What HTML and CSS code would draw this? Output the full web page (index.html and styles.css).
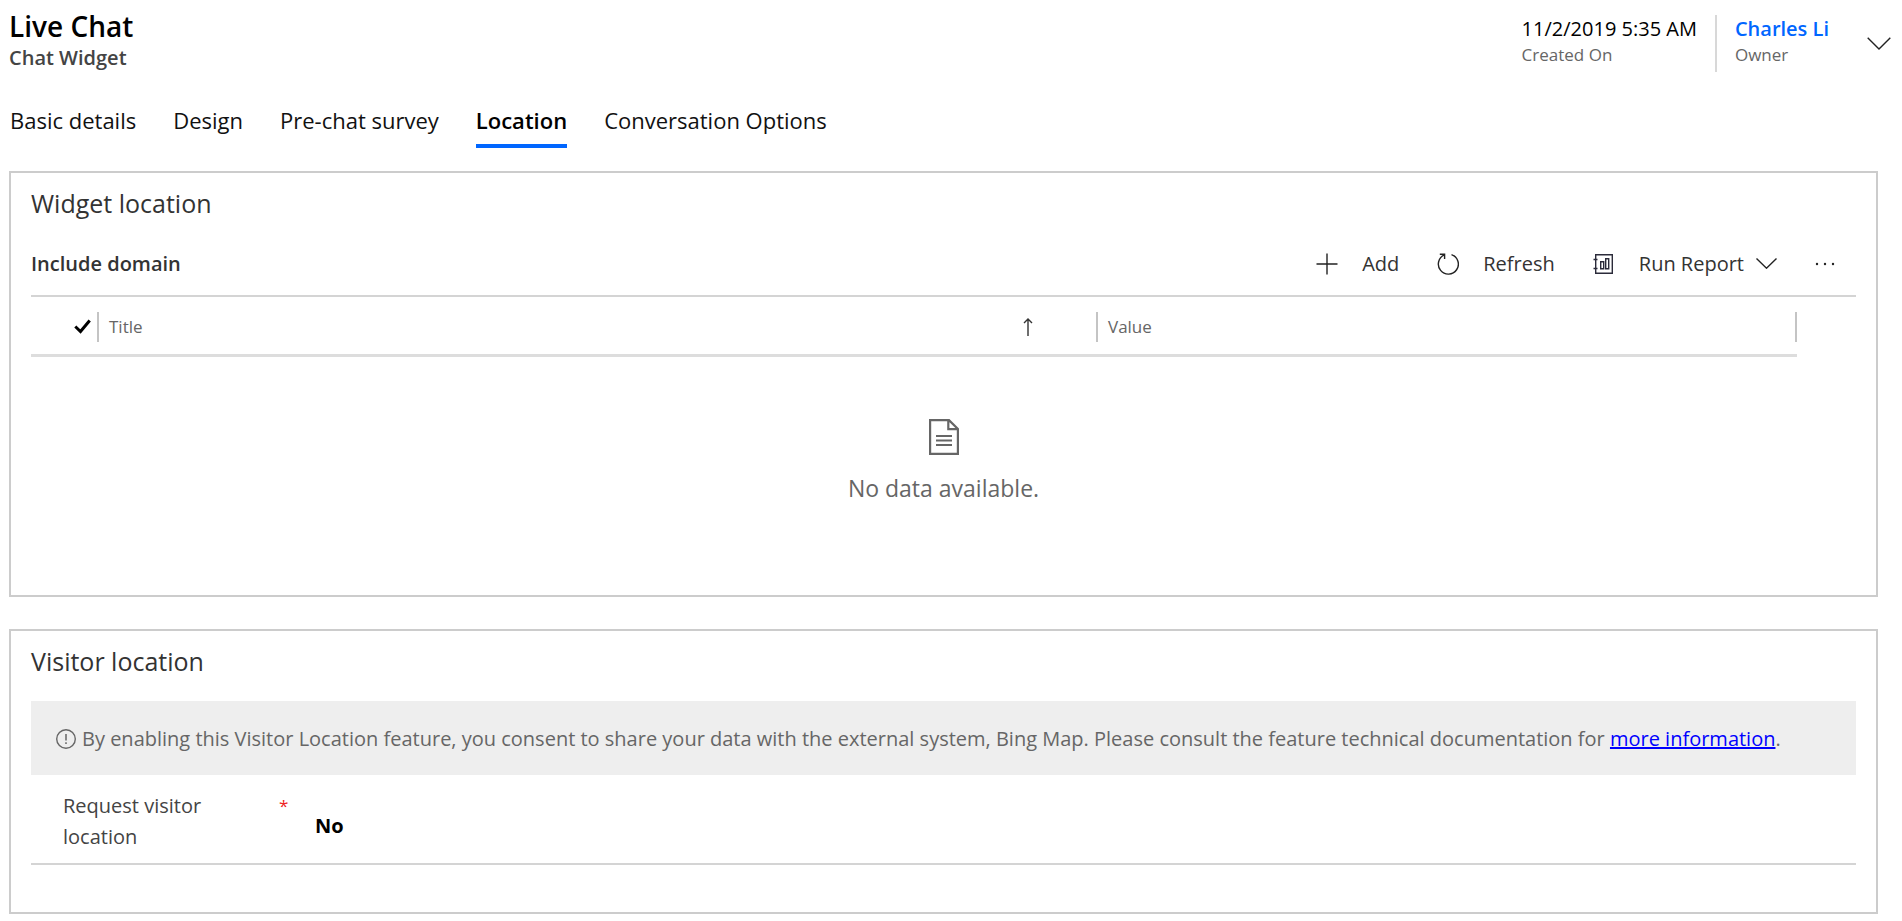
FILE: index.html
```html
<!DOCTYPE html>
<html lang="en">
<head>
<meta charset="utf-8">
<title>Live Chat</title>
<link rel="stylesheet" href="styles.css">
</head>
<body>
<header class="header">
  <div class="record">
    <h1 class="record-name">Live Chat</h1>
    <p class="record-type">Chat Widget</p>
  </div>
  <div class="facts">
    <div class="fact fact-date">
      <span class="fact-value">11/2/2019 5:35 AM</span>
      <span class="fact-label">Created On</span>
    </div>
    <div class="fact fact-owner">
      <a class="fact-value fact-link" href="#">Charles Li</a>
      <span class="fact-label">Owner</span>
    </div>
    <button class="icon-button" type="button" aria-label="Show more">
      <svg width="24" height="13" viewBox="0 0 24 13"><path d="M.7.7 12 12 23.3.7" fill="none" stroke="#222" stroke-width="1.4"/></svg>
    </button>
  </div>
</header>

<nav class="tabs">
  <a class="tab" href="#">Basic details</a>
  <a class="tab" href="#">Design</a>
  <a class="tab" href="#">Pre-chat survey</a>
  <a class="tab tab-active" href="#" aria-current="page">Location</a>
  <a class="tab" href="#">Conversation Options</a>
</nav>

<main class="sections">
  <section class="card">
    <h2 class="card-title">Widget location</h2>
    <div class="grid-bar">
      <h3 class="grid-title">Include domain</h3>
      <div class="commands">
        <button class="command" type="button">
          <svg width="22" height="22" viewBox="0 0 22 22"><path d="M11 .5v21M.5 11h21" fill="none" stroke="#222" stroke-width="1.4"/></svg>
          Add
        </button>
        <button class="command" type="button">
          <svg width="22" height="22" viewBox="0 0 22 22"><path d="M14.5 1.6A10 10 0 1 1 7.4 1.9M2.8 1.2H7.6V6" fill="none" stroke="#222" stroke-width="1.4"/></svg>
          Refresh
        </button>
        <button class="command" type="button">
          <svg width="22" height="22" viewBox="0 0 22 22"><g fill="none" stroke="#2b2b3a" stroke-width="1.4"><path d="M2.7 1.7H19.3V20.3H2.7ZM.5 6.5h4M.5 15.5h4"/><path d="M7.7 8.7h3v7h-3zM12.7 5.7h3v10h-3z"/></g></svg>
          <span class="command-menu">Run Report
            <svg width="21" height="11" viewBox="0 0 21 11"><path d="M.5.5l10 9.7 10-9.7" fill="none" stroke="#222" stroke-width="1.4"/></svg>
          </span>
        </button>
        <button class="command" type="button" aria-label="More commands">
          <svg width="20" height="4" viewBox="0 0 20 4"><g fill="#222"><circle cx="2" cy="2" r="1.2"/><circle cx="10" cy="2" r="1.2"/><circle cx="18" cy="2" r="1.2"/></g></svg>
        </button>
      </div>
    </div>
    <div class="grid">
      <table class="grid-table">
        <thead>
          <tr>
            <th class="col-check"><div class="cell"><svg width="17" height="15" viewBox="0 0 17 15" role="img" aria-label="Select all"><path d="M1.3 7.5 6.5 12.5 15.7 1.5" fill="none" stroke="#000" stroke-width="3"/></svg></div></th>
            <th class="col-title"><div class="cell">Title<svg width="10" height="18" viewBox="0 0 10 18"><path d="M5 18V1M1 5l4-4 4 4" fill="none" stroke="#333" stroke-width="1.4"/></svg></div></th>
            <th><div class="cell">Value</div></th>
          </tr>
        </thead>
      </table>
    </div>
    <div class="empty">
      <svg width="30" height="36" viewBox="0 0 30 36"><g fill="none" stroke="#666" stroke-width="2.2"><path d="M1.1 1.1H20L28.9 10V34.9H1.1ZM19.3 1.1V10.2H28.9M7 17H23M7 21.5H23M7 26H23"/></g></svg>
      <p class="empty-text">No data available.</p>
    </div>
  </section>

  <section class="card">
    <h2 class="card-title">Visitor location</h2>
    <div class="notice">
      <svg width="20" height="20" viewBox="0 0 20 20"><circle cx="10" cy="10" r="9.3" fill="none" stroke="#666" stroke-width="1.4"/><path d="M10 5v6.5M10 13.2v1.8" stroke="#666" stroke-width="1.5"/></svg>
      <p>By enabling this Visitor Location feature, you consent to share your data with the external system, Bing Map. Please consult the feature technical documentation for <a class="notice-link" href="#">more information</a>.</p>
    </div>
    <div class="field">
      <label class="field-label" for="request-location">Request visitor location</label>
      <span class="field-required">*</span>
      <button class="field-value" id="request-location" type="button">No</button>
    </div>
  </section>
</main>
</body>
</html>
```
FILE: styles.css
```css
* {
  box-sizing: border-box;
}

body {
  margin: 0;
  padding: 8px 9px 5px;
  background: #fff;
  color: #333;
  font-family: "Open Sans", "Noto Sans", sans-serif;
  font-size: 20px;
  line-height: 28px;
}

h1, h2, h3, p {
  margin: 0;
}

svg {
  display: block;
  flex: none;
}

button {
  padding: 0;
  border: 0;
  background: none;
  color: inherit;
  font: inherit;
  cursor: pointer;
}

.header {
  display: flex;
  justify-content: space-between;
  align-items: flex-start;
  padding-right: 2px;
}

.record-name {
  color: #000;
  font-size: 28px;
  font-weight: 600;
  line-height: 36px;
}

.record-type {
  color: #444;
  font-weight: 600;
}

.facts {
  display: flex;
  padding-top: 7px;
}

.fact {
  display: flex;
  flex-direction: column;
  height: 57px;
}

.fact-date {
  padding-right: 18px;
}

.fact-owner {
  padding: 0 38px 0 18px;
  border-left: 2px solid #d8d8d8;
}

.fact-value {
  color: #000;
  font-weight: 500;
}

.fact-link {
  color: #0066ff;
  font-weight: 600;
  text-decoration: none;
}

.fact-label {
  color: #666;
  font-size: 17px;
  line-height: 24px;
}

.icon-button {
  align-self: center;
}

.tabs {
  display: flex;
  gap: 37px;
  padding: 32px 1px 0;
}

.tab {
  padding-bottom: 8px;
  border-bottom: 4px solid transparent;
  color: #111;
  font-size: 22px;
  line-height: 32px;
  text-decoration: none;
}

.tab-active {
  border-image: linear-gradient(#0066ff, #0066ff) 1;
  color: #000;
  font-weight: 600;
}

.sections {
  display: flex;
  flex-direction: column;
  gap: 32px;
  padding: 23px 15px 0 0;
}

.card {
  padding: 12px 20px 47px;
  border: 2px solid #ccc;
}

.card-title {
  color: #333;
  font-size: 25px;
  font-weight: 400;
  line-height: 36px;
}

.grid-bar {
  display: flex;
  justify-content: space-between;
  align-items: center;
  height: 76px;
  padding: 11px 21px 0 0;
  border-bottom: 2px solid #d4d4d4;
}

.grid-title {
  font-size: 20px;
  font-weight: 600;
}

.commands {
  display: flex;
  align-items: center;
  gap: 38px;
}

.command {
  display: flex;
  align-items: center;
  gap: 24px;
}

.command-menu {
  display: flex;
  align-items: center;
  gap: 12px;
}

.grid {
  padding-right: 59px;
}

.grid-table {
  width: 100%;
  border-spacing: 0;
  border-bottom: 3px solid #ddd;
  table-layout: fixed;
}

.grid-table th {
  height: 57px;
  padding: 2px 0 0;
  color: #666;
  font-size: 17px;
  font-weight: 400;
  text-align: left;
}

.grid-table .col-check {
  width: 68px;
}

.grid-table .col-title {
  width: 999px;
}

.cell {
  display: flex;
  justify-content: space-between;
  align-items: center;
  height: 30px;
  padding-left: 10px;
  border-right: 2px solid #c4c4c4;
}

.col-check .cell {
  justify-content: flex-end;
  padding-right: 6px;
}

.col-title .cell {
  padding-right: 63px;
}

.empty {
  display: flex;
  flex-direction: column;
  align-items: center;
  gap: 17px;
  padding: 62px 0 44px;
}

.empty-text {
  color: #666;
  font-size: 23px;
  line-height: 32px;
}

.notice {
  display: flex;
  align-items: center;
  gap: 6px;
  margin-top: 22px;
  padding: 24px 25px 22px;
  background: #eee;
  color: #666;
}

.notice-link {
  color: #00f;
  text-decoration-thickness: 2px;
}

.field {
  display: grid;
  grid-template-columns: 216px 36px auto;
  justify-content: start;
  align-items: start;
  padding: 15px 32px 11px;
  border-bottom: 2px solid #d4d4d4;
  line-height: 31px;
}

.field-label {
  max-width: 180px;
  color: #444;
}

.field-required {
  color: #e22;
  font-size: 17px;
}

.field-value {
  padding-top: 20px;
  color: #000;
  font-weight: 700;
}
```
